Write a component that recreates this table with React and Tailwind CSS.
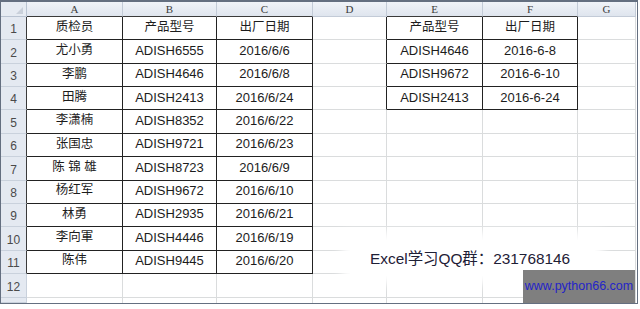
import React from 'react';

const t1 = [
  ['质检员', '产品型号', '出厂日期'],
  ['尤小勇', 'ADISH6555', '2016/6/6'],
  ['李鹏', 'ADISH4646', '2016/6/8'],
  ['田腾', 'ADISH2413', '2016/6/24'],
  ['李潇楠', 'ADISH8352', '2016/6/22'],
  ['张国忠', 'ADISH9721', '2016/6/23'],
  ['陈 锦 雄', 'ADISH8723', '2016/6/9'],
  ['杨红军', 'ADISH9672', '2016/6/10'],
  ['林勇', 'ADISH2935', '2016/6/21'],
  ['李向軍', 'ADISH4446', '2016/6/19'],
  ['陈伟', 'ADISH9445', '2016/6/20'],
];

const t2 = [
  ['产品型号', '出厂日期'],
  ['ADISH4646', '2016-6-8'],
  ['ADISH9672', '2016-6-10'],
  ['ADISH2413', '2016-6-24'],
];

const cols = ['A', 'B', 'C', 'D', 'E', 'F', 'G'];

const cellText = (r, c) => {
  if (r >= 1 && r <= 11 && c >= 1 && c <= 3) return t1[r - 1][c - 1];
  if (r >= 1 && r <= 4 && (c === 5 || c === 6)) return t2[r - 1][c - 5];
  return '';
};

const inT1 = (r, c) => r >= 1 && r <= 11 && c >= 1 && c <= 3;
const inT2 = (r, c) => r >= 1 && r <= 4 && (c === 5 || c === 6);

function Cell({ r, c }) {
  const text = cellText(r, c);
  const cjk = /[\u4e00-\u9fff]/.test(text);
  const dark = inT1(r, c) || inT2(r, c);
  // left edge of table 2 sits on column D's right border
  const leftOfT2 = c === 4 && r >= 1 && r <= 4;
  let cls = 'flex items-center justify-center pb-[2px] border-r border-b text-[#1c1c1c] whitespace-nowrap ';
  if (dark) cls += 'border-[#222]';
  else if (leftOfT2) cls += 'border-r-[#222] border-b-[#dadcdd]';
  else cls += 'border-[#dadcdd]';
  return (
    <div className={cls}>
      <span className={cjk ? 'text-[12.5px]' : 'text-[13px]'}>{text}</span>
    </div>
  );
}

export default function App() {
  const rows = Array.from({ length: 13 }, (_, i) => i + 1);
  return (
    <div className="w-[640px] h-[309px] bg-white overflow-hidden relative" style={{ fontFamily: '"Liberation Sans", "Noto Sans CJK SC", sans-serif' }}>
      <div className="w-[638px] h-[304px] border-t-2 border-l border-r border-b border-[#646f80] grid grid-cols-[26px_96px_94px_96px_74px_96px_95px_58px] grid-rows-[15px_repeat(11,23.36px)_24px_5px]">
        {/* corner */}
        <div className="bg-[#e6ebf2] border-r border-b border-[#b9c3d1] relative">
          <svg className="absolute right-[3px] bottom-[2px]" width="7" height="7" viewBox="0 0 7 7">
            <polygon points="7,0 7,7 0,7" fill="#c9d0da" />
          </svg>
        </div>
        {cols.map((l, i) => (
          <div
            key={l}
            className={
              i <= 2 || i === 4 || i === 5
                ? 'bg-gradient-to-b from-[#f0f3f8] to-[#dfe5ee] border-r border-[#c3cbd7] border-b border-b-[#3a3a3a] flex items-center justify-center text-[11px] text-[#3c3c3c]'
                : 'bg-gradient-to-b from-[#f0f3f8] to-[#dfe5ee] border-r border-b border-[#c3cbd7] flex items-center justify-center text-[11px] text-[#3c3c3c]'
            }
            style={{ fontFamily: '"Liberation Serif", serif' }}
          >
            {l}
          </div>
        ))}
        {rows.map((r) => (
          <React.Fragment key={r}>
            <div
              className={
                r <= 11
                  ? 'bg-[#e4e9f1] border-r border-r-[#3a3a3a] border-b border-b-[#c9d1dc] flex items-end justify-center pb-[1px] text-[12px] text-[#4a4a4a]'
                  : 'bg-[#e4e9f1] border-r border-b border-[#c9d1dc] flex items-end justify-center pb-[1px] text-[12px] text-[#4a4a4a]'
              }
            >
              {r <= 12 ? r : ''}
            </div>
            {cols.map((_, ci) =>
              r <= 12 ? (
                <Cell key={ci} r={r} c={ci + 1} />
              ) : (
                <div key={ci} className="border-r border-[#dadcdd]" />
              )
            )}
          </React.Fragment>
        ))}
      </div>

      {/* pasted caption over the sheet */}
      <div className="absolute left-[350px] top-[240px] w-[245px] h-[36px] bg-white shadow-[0_0_10px_8px_#fff] flex items-center pl-[20px] pt-[1px]">
        <span className="text-[15.4px] text-[#1e2036] whitespace-nowrap">Excel学习QQ群：231768146</span>
      </div>

      {/* watermark */}
      <div className="absolute left-[523px] top-[270px] w-[112px] h-[33px] bg-[#7f7f7f] flex items-center justify-center">
        <span className="text-[12.5px] text-[#2424c8]">www.python66.com</span>
      </div>
    </div>
  );
}
